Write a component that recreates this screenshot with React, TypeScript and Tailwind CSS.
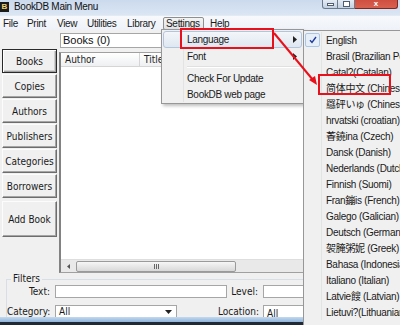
import React from "react";

const ui = "font-['Liberation_Sans',sans-serif] tracking-[-0.3px]";
const narrow = "font-['Liberation_Sans_Narrow','DejaVu_Sans_Condensed','Liberation_Sans',sans-serif] tracking-normal";

const LANGS = [
  "English",
  "Brasil (Brazilian Portuguese)",
  "Catal?(Catalan)",
  "简体中文 (Chinese Simplified)",
  "羉砰いゅ (Chinese Traditional)",
  "hrvatski (croatian)",
  "萫鐃ina (Czech)",
  "Dansk (Danish)",
  "Nederlands (Dutch)",
  "Finnish (Suomi)",
  "Fran鏰is (French)",
  "Galego (Galician)",
  "Deutsch (German)",
  "袈腌粥妮 (Greek)",
  "Bahasa (Indonesian)",
  "Italiano (Italian)",
  "Latvie餿 (Latvian)",
  "Lietuvi?(Lithuanian)",
];

const MENUS = [
  { label: "File", w: "w-[24px]" },
  { label: "Print", w: "w-[30px]" },
  { label: "View", w: "w-[30px]" },
  { label: "Utilities", w: "w-[40px]" },
  { label: "Library", w: "w-[39px]" },
];

const SIDE = ["Books", "Copies", "Authors", "Publishers", "Categories", "Borrowers"];

function Arrow() {
  return (
    <svg width="4" height="7" viewBox="0 0 4 7">
      <polygon points="0,0 4,3.5 0,7" fill="#222" />
    </svg>
  );
}

function SideButton({ label, active, tall }: { label: string; active?: boolean; tall?: boolean }) {
  return (
    <div
      className={`w-[55px] ${tall ? "h-[36px] mt-[2px]" : "h-[24px]"} flex items-center justify-center bg-[#f0f0f0] text-[10px] text-[#1a1a1a] ${narrow} ${
        active
          ? "border border-[#2a2a2a] shadow-[inset_1px_1px_0_#fff,inset_-1px_-1px_0_#a0a0a0,inset_-2px_-2px_0_#d0d0d0]"
          : "border border-t-[#fcfcfc] border-l-[#fcfcfc] border-r-[#6d6d6d] border-b-[#6d6d6d] shadow-[inset_-1px_-1px_0_#a5a5a5]"
      }`}
    >
      {label}
    </div>
  );
}

export default function App() {
  return (
    <div className={`relative w-[400px] h-[325px] overflow-hidden bg-[#f0f0f0] flex flex-col ${ui}`}>
      {/* title bar */}
      <div className="h-[15px] flex items-start bg-linear-to-b from-[#cbdaed] to-[#dbe6f3]">
        <div className="w-[9px] h-[10px] mt-[2px] bg-[#1b1b1b] flex items-center justify-center text-[8px] leading-none font-bold text-[#f3d36b] tracking-normal">
          B
        </div>
        <span className="ml-[5px] text-[10px] leading-[13px] text-[#111]">BookDB Main Menu</span>
        <div className="ml-auto mr-[2px] flex">
          <div className="w-[16px] h-[9px] rounded-bl-[3px] border border-t-0 border-[#6a7a8e] bg-linear-to-b from-[#e4ebf4] to-[#c3d0e1] flex items-end justify-center pb-[2px]">
            <div className="w-[7px] h-[3px] bg-white border border-[#4e5d72]" />
          </div>
          <div className="w-[17px] h-[9px] border border-t-0 border-l-0 border-[#6a7a8e] bg-linear-to-b from-[#e4ebf4] to-[#c3d0e1] flex items-end justify-center pb-[1px]">
            <div className="w-[7px] h-[6px] border border-[#4e5d72] bg-white" />
          </div>
          <div className="w-[43px] h-[9px] rounded-br-[3px] border border-t-0 border-l-0 border-[#7d2a22] bg-linear-to-b from-[#cf4f40] to-[#d9604e] flex items-center justify-center">
            <span className="text-[8px] leading-[8px] font-bold text-white tracking-normal">x</span>
          </div>
        </div>
      </div>

      {/* menu bar */}
      <div className="h-[15px] flex items-center bg-linear-to-b from-[#f7f9fc] to-[#eef2f8] border-t border-[#e3eaf3] text-[10px] text-[#1a1a1a]">
        {MENUS.map((m) => (
          <div key={m.label} className={`${m.w} pl-[3px] leading-[13px]`}>
            {m.label}
          </div>
        ))}
        <div className="w-[41px] h-[13px] pl-[2px] leading-[11px] border border-[#8e8f8f] rounded-[2px] bg-linear-to-b from-[#f4f4f4] to-[#e0e2e5]">
          Settings
        </div>
        <div className="ml-[3px] pl-[3px] leading-[13px]">Help</div>
      </div>

      {/* main area */}
      <div className="h-[243px] flex">
        <div className="w-[59px] pt-[19px] pl-[2px] flex flex-col gap-[1px]">
          {SIDE.map((s, i) => (
            <SideButton key={s} label={s} active={i === 0} />
          ))}
          <SideButton label="Add Book" tall />
        </div>
        <div className="flex-1 flex flex-col pt-[3px]">
          <div className="ml-[1px] w-[103px] h-[15px] border border-[#a6a6a6] bg-white pl-[2px] text-[11px] leading-[13px] text-[#111] tracking-normal">
            Books (0)
          </div>
          <div className="mt-[4px] w-[340px] h-[221px] bg-white border-l-2 border-t border-b border-l-[#828282] border-t-[#a0a0a0] border-b-[#a0a0a0] flex flex-col">
            <div className={`h-[14px] flex text-[10px] text-[#222] ${narrow} bg-linear-to-b from-white to-[#eef0f2] border-b border-[#d5d5d5]`}>
              <div className="w-[79px] pl-[4px] leading-[14px] border-r border-[#d5d5d5]">Author</div>
              <div className="pl-[4px] leading-[14px]">Title</div>
            </div>
            <div className="flex-1" />
            <div className="h-[13px] flex items-center bg-[#e9e9e9] border-t border-[#dedede]">
              <div className="w-[15px] h-full flex items-center justify-center">
                <svg width="3" height="5" viewBox="0 0 3 5">
                  <polygon points="3,0 0,2.5 3,5" fill="#555" />
                </svg>
              </div>
              <div className="w-[160px] h-[11px] rounded-[2px] border border-[#9a9a9a] bg-linear-to-b from-[#f6f6f6] to-[#d8d8d8] flex items-center justify-center gap-[1px]">
                <div className="w-[1px] h-[5px] bg-[#666]" />
                <div className="w-[1px] h-[5px] bg-[#666]" />
                <div className="w-[1px] h-[5px] bg-[#666]" />
              </div>
            </div>
          </div>
        </div>
      </div>

      {/* filters */}
      <div className="flex-1 overflow-hidden pl-[6px]">
        <fieldset className={`w-[420px] h-[60px] border border-[#d5dfe5] ${narrow} text-[10px] text-[#1a1a1a]`}>
          <legend className="ml-[4px] px-[2px] leading-[12px]">Filters</legend>
          <div className="flex items-center h-[13px]">
            <div className="w-[43px] text-right">Text:</div>
            <div className="ml-[5px] w-[172px] h-[13px] bg-white border border-[#a6a6a6]" />
            <div className="w-[31px] text-right">Level:</div>
            <div className="ml-[5px] w-[140px] h-[13px] bg-white border border-[#a6a6a6]" />
          </div>
          <div className="flex items-start mt-[7px] h-[14px]">
            <div className="w-[42px] text-right leading-[13px]">Category:</div>
            <div className="ml-[6px] w-[122px] h-[14px] bg-white border border-[#a6a6a6] flex items-center justify-between pl-[3px] pr-[4px]">
              <span className="text-[10px] leading-[12px]">All</span>
              <svg width="7" height="4" viewBox="0 0 7 4">
                <polygon points="0,0 7,0 3.5,4" fill="#222" />
              </svg>
            </div>
            <div className="w-[82px] text-right leading-[13px]">Location:</div>
            <div className="ml-[4px] w-[140px] h-[14px] bg-white border border-[#a6a6a6] pl-[3px]">
              <span className="text-[10px] leading-[12px]">All</span>
            </div>
          </div>
        </fieldset>
      </div>
      <div className="h-[8px] flex flex-col">
        <div className="h-[5px] bg-linear-to-b from-[#c4d9ef] to-[#8fb3dc]" />
        <div className="h-[3px] bg-[#1f2a36]" />
      </div>

      {/* settings dropdown */}
      <div className="absolute left-[161px] top-[29px] w-[143px] h-[75px] border border-[#979797] bg-[#f0f0f0] pt-[2px] px-[1px] shadow-[2px_2px_3px_rgba(0,0,0,0.25)] text-[10px] text-[#1a1a1a]">
        <div className="h-[17px] -mt-[1px] flex items-center rounded-[3px] border border-[#b3c5dc] bg-linear-to-b from-[#f3f6fa] to-[#dfe7f1]">
          <div className="w-[20px] h-full" />
          <div className="flex-1 pl-[3px]">Language</div>
          <div className="pr-[4px] flex items-center"><Arrow /></div>
        </div>
        <div className="h-[16px] flex items-center">
          <div className="w-[21px] h-full border-r border-[#e2e3e3]" />
          <div className="flex-1 pl-[3px]">Font</div>
          <div className="pr-[5px] flex items-center"><Arrow /></div>
        </div>
        <div className="h-[6px] flex">
          <div className="w-[21px] h-full border-r border-[#e2e3e3]" />
          <div className="flex-1 ml-[3px] mt-[2px] h-[2px] border-t border-b border-t-[#e0e0e0] border-b-white" />
        </div>
        <div className="h-[16px] flex items-center">
          <div className="w-[21px] h-full border-r border-[#e2e3e3]" />
          <div className="flex-1 pl-[3px]">Check For Update</div>
        </div>
        <div className="h-[16px] flex items-center">
          <div className="w-[21px] h-full border-r border-[#e2e3e3]" />
          <div className="flex-1 pl-[3px]">BookDB web page</div>
        </div>
      </div>

      {/* language submenu */}
      <div className="absolute left-[303px] top-[30px] w-[170px] h-[320px] border border-[#979797] bg-[#f0f0f0] pt-[1px] px-[1px] text-[10px] text-[#1a1a1a] font-['Liberation_Sans','Noto_Sans_CJK_SC',sans-serif]">
        {LANGS.map((l, i) => (
          <div key={l} className="h-[16px] flex items-center">
            <div className="w-[17px] h-full border-r border-[#e2e3e3] flex items-center">
              {i === 0 && (
                <div className="w-[15px] h-[14px] rounded-[2px] border border-[#a9c6e8] bg-[#e6eef8] flex items-center justify-center">
                  <svg width="8" height="8" viewBox="0 0 8 8">
                    <path d="M1 4.2 L3 6.5 L7 1" stroke="#1f3b9e" strokeWidth="1.4" fill="none" />
                  </svg>
                </div>
              )}
            </div>
            <div className="pl-[4px] whitespace-nowrap">{l}</div>
          </div>
        ))}
      </div>

      {/* red annotations */}
      <svg className="absolute left-0 top-0 pointer-events-none" width="400" height="325">
        <rect x="181" y="29" width="92" height="19" fill="none" stroke="#e8101a" strokeWidth="2" />
        <rect x="319" y="75" width="71" height="19" fill="none" stroke="#e8101a" strokeWidth="2" />
        <line x1="274" y1="33" x2="313" y2="80" stroke="#e8101a" strokeWidth="2" />
        <polygon points="317,85 309,80 315,76" fill="#e8101a" />
      </svg>
    </div>
  );
}
